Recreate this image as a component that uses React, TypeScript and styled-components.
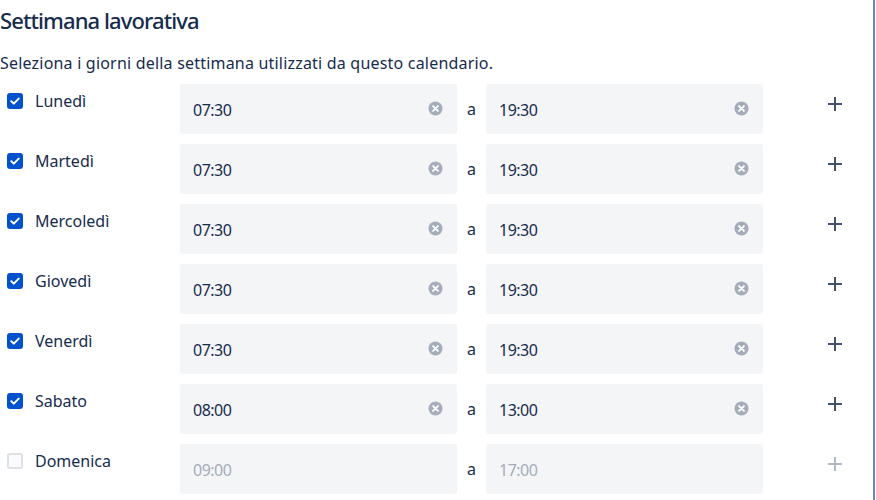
import React from 'react';
import styled, { createGlobalStyle } from 'styled-components';

const GlobalStyle = createGlobalStyle`
  html, body {
    margin: 0;
    padding: 0;
    background: #fff;
  }
  body {
    font-family: "Noto Sans", "Open Sans", sans-serif;
    color: #172b4d;
  }
`;

type Day = {
  name: string;
  from: string;
  to: string;
  enabled: boolean;
};

const days: Day[] = [
  { name: 'Lunedì', from: '07:30', to: '19:30', enabled: true },
  { name: 'Martedì', from: '07:30', to: '19:30', enabled: true },
  { name: 'Mercoledì', from: '07:30', to: '19:30', enabled: true },
  { name: 'Giovedì', from: '07:30', to: '19:30', enabled: true },
  { name: 'Venerdì', from: '07:30', to: '19:30', enabled: true },
  { name: 'Sabato', from: '08:00', to: '13:00', enabled: true },
  { name: 'Domenica', from: '09:00', to: '17:00', enabled: false },
];

function ClearIcon() {
  return (
    <svg width="15" height="15" viewBox="0 0 16 16">
      <circle cx="8" cy="8" r="7.5" fill="#a5adba" />
      <path d="M5.4 5.4l5.2 5.2M10.6 5.4l-5.2 5.2" stroke="#fff" strokeWidth="2" strokeLinecap="round" />
    </svg>
  );
}

function PlusIcon({ color }: { color: string }) {
  return (
    <svg width="16" height="16" viewBox="0 0 16 16">
      <path d="M8 1v14M1 8h14" stroke={color} strokeWidth="2" />
    </svg>
  );
}

export default function App() {
  return (
    <>
      <GlobalStyle />
      <Page>
        <Title>Settimana lavorativa</Title>
        <Description>Seleziona i giorni della settimana utilizzati da questo calendario.</Description>
        <Rows>
          {days.map((day) => (
            <Row key={day.name}>
              <DayLabel>
                <Check $checked={day.enabled}>
                  {day.enabled && (
                    <svg width="10" height="8" viewBox="0 0 10 8">
                      <path d="M1.3 4.2l2.5 2.4L8.7 1.6" stroke="#fff" strokeWidth="2" fill="none" strokeLinecap="round" strokeLinejoin="round" />
                    </svg>
                  )}
                </Check>
                <DayName>{day.name}</DayName>
              </DayLabel>
              <TimeField>
                <TimeValue $disabled={!day.enabled}>{day.from}</TimeValue>
                {day.enabled && <ClearIcon />}
              </TimeField>
              <Separator>a</Separator>
              <TimeField>
                <TimeValue $disabled={!day.enabled}>{day.to}</TimeValue>
                {day.enabled && <ClearIcon />}
              </TimeField>
              <AddButton>
                <PlusIcon color={day.enabled ? '#42526e' : '#b3bac5'} />
              </AddButton>
            </Row>
          ))}
        </Rows>
      </Page>
    </>
  );
}

const Page = styled.div`
  width: 875px;
  height: 500px;
  box-sizing: border-box;
  border-right: 2px solid #6d86b8;
  overflow: hidden;
`;

const Title = styled.h2`
  margin: 0;
  padding-top: 4px;
  font-size: 22px;
  font-weight: 500;
  line-height: 32px;
  color: #172b4d;
  letter-spacing: -0.9px;
`;

const Description = styled.p`
  margin: 16px 0 0;
  font-size: 16px;
  line-height: 22px;
  color: #172b4d;
  letter-spacing: 0.2px;
`;

const Rows = styled.div`
  display: flex;
  flex-direction: column;
  gap: 10px;
  margin-top: 10px;
`;

const Row = styled.div`
  display: grid;
  grid-template-columns: 180px 277px 29px 277px 144px;
  align-items: start;
  height: 50px;
`;

const DayLabel = styled.label`
  display: flex;
  align-items: center;
  gap: 12px;
  padding: 7px 0 0 7px;
`;

const Check = styled.span<{ $checked: boolean }>`
  display: flex;
  align-items: center;
  justify-content: center;
  width: 16px;
  height: 16px;
  box-sizing: border-box;
  border-radius: 3px;
  background: ${(p) => (p.$checked ? '#0052cc' : '#fafbfc')};
  border: ${(p) => (p.$checked ? 'none' : '2px solid #dfe1e6')};
`;

const DayName = styled.span`
  font-size: 16px;
  line-height: 20px;
  color: #172b4d;
`;

const TimeField = styled.div`
  display: flex;
  align-items: center;
  justify-content: space-between;
  height: 50px;
  box-sizing: border-box;
  padding: 0 14px 2px 13px;
  border-radius: 3px;
  background: #f4f5f7;
`;

const TimeValue = styled.span<{ $disabled: boolean }>`
  padding-top: 4px;
  font-size: 16px;
  color: ${(p) => (p.$disabled ? '#a5adba' : '#172b4d')};
  letter-spacing: -0.5px;
`;

const Separator = styled.span`
  padding-top: 14px;
  text-align: center;
  font-size: 16px;
  line-height: 22px;
  color: #172b4d;
`;

const AddButton = styled.button`
  display: flex;
  align-items: center;
  justify-content: center;
  width: 32px;
  height: 32px;
  margin: 4px 0 0 56px;
  padding: 0;
  border: none;
  background: transparent;
  cursor: pointer;
`;
